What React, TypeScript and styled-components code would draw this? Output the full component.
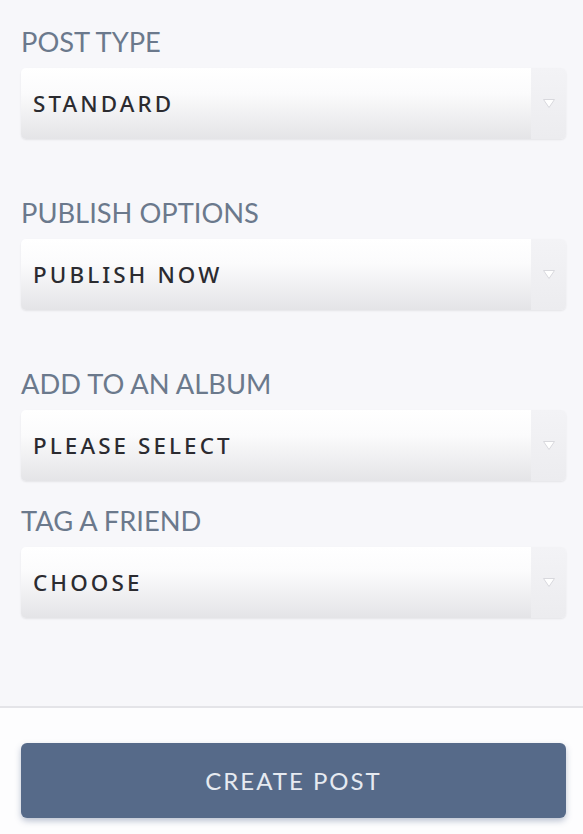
import React from "react";
import styled, { createGlobalStyle } from "styled-components";

const Global = createGlobalStyle`
  html, body { margin: 0; padding: 0; background: #fdfdfe; }
  body { font-family: Lato, "Open Sans", sans-serif; }
`;

const Page = styled.div`
  width: 583px;
  height: 834px;
  display: flex;
  flex-direction: column;
  overflow: hidden;
`;

const Form = styled.div`
  background: #f7f7fa;
  padding: 26px 17px 0 21px;
  height: 680px;
  border-bottom: 2px solid #e4e4e8;
  display: flex;
  flex-direction: column;
`;

const Field = styled.div<{ $gap: number }>`
  display: flex;
  flex-direction: column;
  margin-bottom: ${(p) => p.$gap}px;
`;

const Label = styled.div`
  font-size: 27.3px;
  line-height: 32px;
  color: #6b798c;
  font-weight: 400;
  margin-bottom: 10px;
`;

const Select = styled.div`
  height: 71px;
  display: flex;
  border-radius: 5px;
  overflow: hidden;
  box-shadow: 0 1px 2px rgba(0, 0, 0, 0.08);
`;

const Value = styled.div`
  flex: 1;
  display: flex;
  align-items: center;
  padding-left: 12px;
  background: linear-gradient(#ffffff 0%, #fbfbfc 35%, #e4e4e7 100%);
  font-family: "Noto Sans", Lato, sans-serif;
  font-size: 22.4px;
  letter-spacing: 3.1px;
  font-weight: 500;
  color: #2b2b30;
`;

const Arrow = styled.div`
  width: 35px;
  background: linear-gradient(#f3f3f6, #ececef);
  display: flex;
  align-items: center;
  justify-content: center;
`;

const Footer = styled.div`
  flex: 1;
  background: #fdfdfe;
  padding: 35px 17px 0 21px;
`;

const Button = styled.button`
  width: 100%;
  height: 75px;
  border: none;
  border-radius: 6px;
  background: #566a89;
  color: #e6eaf1;
  font-family: Lato, "Open Sans", sans-serif;
  font-size: 24px;
  font-weight: 400;
  letter-spacing: 2px;
  box-shadow: 0 3px 6px rgba(70, 90, 130, 0.35);
`;

const fields = [
  { label: "POST TYPE", value: "STANDARD", gap: 58 },
  { label: "PUBLISH OPTIONS", value: "PUBLISH NOW", gap: 58 },
  { label: "ADD TO AN ALBUM", value: "PLEASE SELECT", gap: 24 },
  { label: "TAG A FRIEND", value: "CHOOSE", gap: 0 },
];

export default function App() {
  return (
    <Page>
      <Global />
      <Form>
        {fields.map((f) => (
          <Field key={f.label} $gap={f.gap}>
            <Label>{f.label}</Label>
            <Select>
              <Value>{f.value}</Value>
              <Arrow>
                <svg width="14" height="11" viewBox="0 0 14 11">
                  <path d="M1.5 1.5 L12.5 1.5 L7 9.5 Z" fill="#ffffff" stroke="#d8d8dd" strokeWidth="1" strokeLinejoin="round" />
                </svg>
              </Arrow>
            </Select>
          </Field>
        ))}
      </Form>
      <Footer>
        <Button>CREATE POST</Button>
      </Footer>
    </Page>
  );
}
